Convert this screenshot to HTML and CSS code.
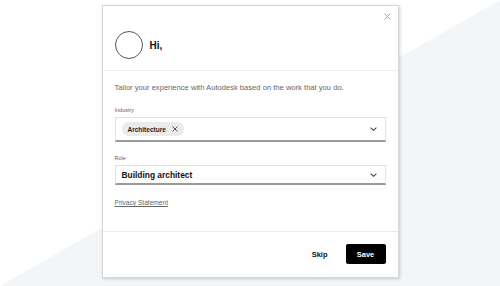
FILE: index.html
```html
<!DOCTYPE html>
<html>
<head>
    <title>Tailor your experience</title>
    <link rel="stylesheet" href="styles.css">
</head>
<body>
    <div class="modal">
        <!-- Header -->
        <div class="modal-header">
            <button class="close-btn" aria-label="Close">
                <svg width="7" height="7" viewBox="0 0 7 7"><path d="M0.5 0.5L6.5 6.5M6.5 0.5L0.5 6.5" stroke="#aaa" stroke-width="1"/></svg>
            </button>
            <div class="avatar"></div>
            <div class="greeting">Hi,</div>
        </div>

        <!-- Body -->
        <div class="modal-body">
            <p class="intro">Tailor your experience with Autodesk based on the work that you do.</p>

            <div class="field">
                <label>Industry</label>
                <div class="select select-tall">
                    <span class="chip">Architecture
                        <svg width="6" height="6" viewBox="0 0 6 6"><path d="M0.5 0.5L5.5 5.5M5.5 0.5L0.5 5.5" stroke="#444" stroke-width="0.9"/></svg>
                    </span>
                    <svg class="chevron" width="7" height="4" viewBox="0 0 7 4"><path d="M0.6 0.6L3.5 3.3L6.4 0.6" fill="none" stroke="#444" stroke-width="1.1"/></svg>
                </div>
            </div>

            <div class="field">
                <label>Role</label>
                <div class="select">
                    <span class="value">Building architect</span>
                    <svg class="chevron" width="7" height="4" viewBox="0 0 7 4"><path d="M0.6 0.6L3.5 3.3L6.4 0.6" fill="none" stroke="#444" stroke-width="1.1"/></svg>
                </div>
            </div>

            <a class="privacy" href="#">Privacy Statement</a>
        </div>

        <!-- Footer -->
        <div class="modal-footer">
            <button class="btn-skip">Skip</button>
            <button class="btn-save">Save</button>
        </div>
    </div>
</body>
</html>
```

FILE: styles.css
```css
html, body {
    height: 100%;
}
body {
    margin: 0;
    font-family: "Liberation Sans", Arial, sans-serif;
    background: linear-gradient(to bottom right, #ffffff 50%, #f3f6f9 50%);
    color: #111;
}
.modal {
    position: relative;
    width: 295px;
    margin: 5px auto 0;
    background: #fff;
    border: 1px solid #d6d6d6;
    box-shadow: 1px 1px 3px rgba(0, 0, 0, 0.18);
}
.modal-header {
    display: flex;
    align-items: center;
    gap: 7px;
    padding: 25px 12px 11px;
    border-bottom: 1px solid #ececec;
}
.close-btn {
    position: absolute;
    top: 7px;
    right: 7px;
    padding: 0;
    border: none;
    background: none;
    line-height: 0;
}
.avatar {
    width: 26px;
    height: 26px;
    border: 1px solid #555;
    border-radius: 50%;
}
.greeting {
    font-size: 10px;
    font-weight: bold;
}
.modal-body {
    padding: 12px 12px 22px;
}
.intro {
    margin: 0;
    font-size: 7.6px;
    line-height: 10px;
    color: #666;
}
.field {
    margin-top: 13px;
}
.field + .field {
    margin-top: 12px;
}
label {
    display: block;
    font-size: 5.5px;
    line-height: 8px;
    color: #6b5a70;
    margin-bottom: 3px;
}
.select {
    display: flex;
    align-items: center;
    justify-content: space-between;
    box-sizing: border-box;
    height: 20px;
    padding: 0 8px 0 6px;
    border: 1px solid #e2e2e2;
    border-bottom: 2px solid #999;
}
.select-tall {
    height: 25px;
}
.chip {
    display: inline-flex;
    align-items: center;
    gap: 6px;
    height: 14px;
    padding: 0 6px;
    border-radius: 7px;
    background: #ebebeb;
    font-size: 6.5px;
    font-weight: bold;
    color: #222;
}
.value {
    font-size: 8.4px;
    font-weight: bold;
    color: #111;
}
.privacy {
    display: inline-block;
    margin-top: 13px;
    font-size: 6.6px;
    line-height: 9px;
    color: #666;
}
.modal-footer {
    display: flex;
    justify-content: flex-end;
    align-items: center;
    gap: 18px;
    padding: 12px 12px 13px;
    border-top: 1px solid #ececec;
}
button {
    font-family: inherit;
    cursor: pointer;
}
.btn-skip {
    padding: 0;
    border: none;
    background: none;
    font-size: 7.5px;
    font-weight: bold;
    color: #111;
}
.btn-save {
    width: 40px;
    height: 20px;
    padding: 0;
    border: none;
    border-radius: 2px;
    background: #000;
    color: #fff;
    font-size: 7.5px;
    font-weight: bold;
}
```
